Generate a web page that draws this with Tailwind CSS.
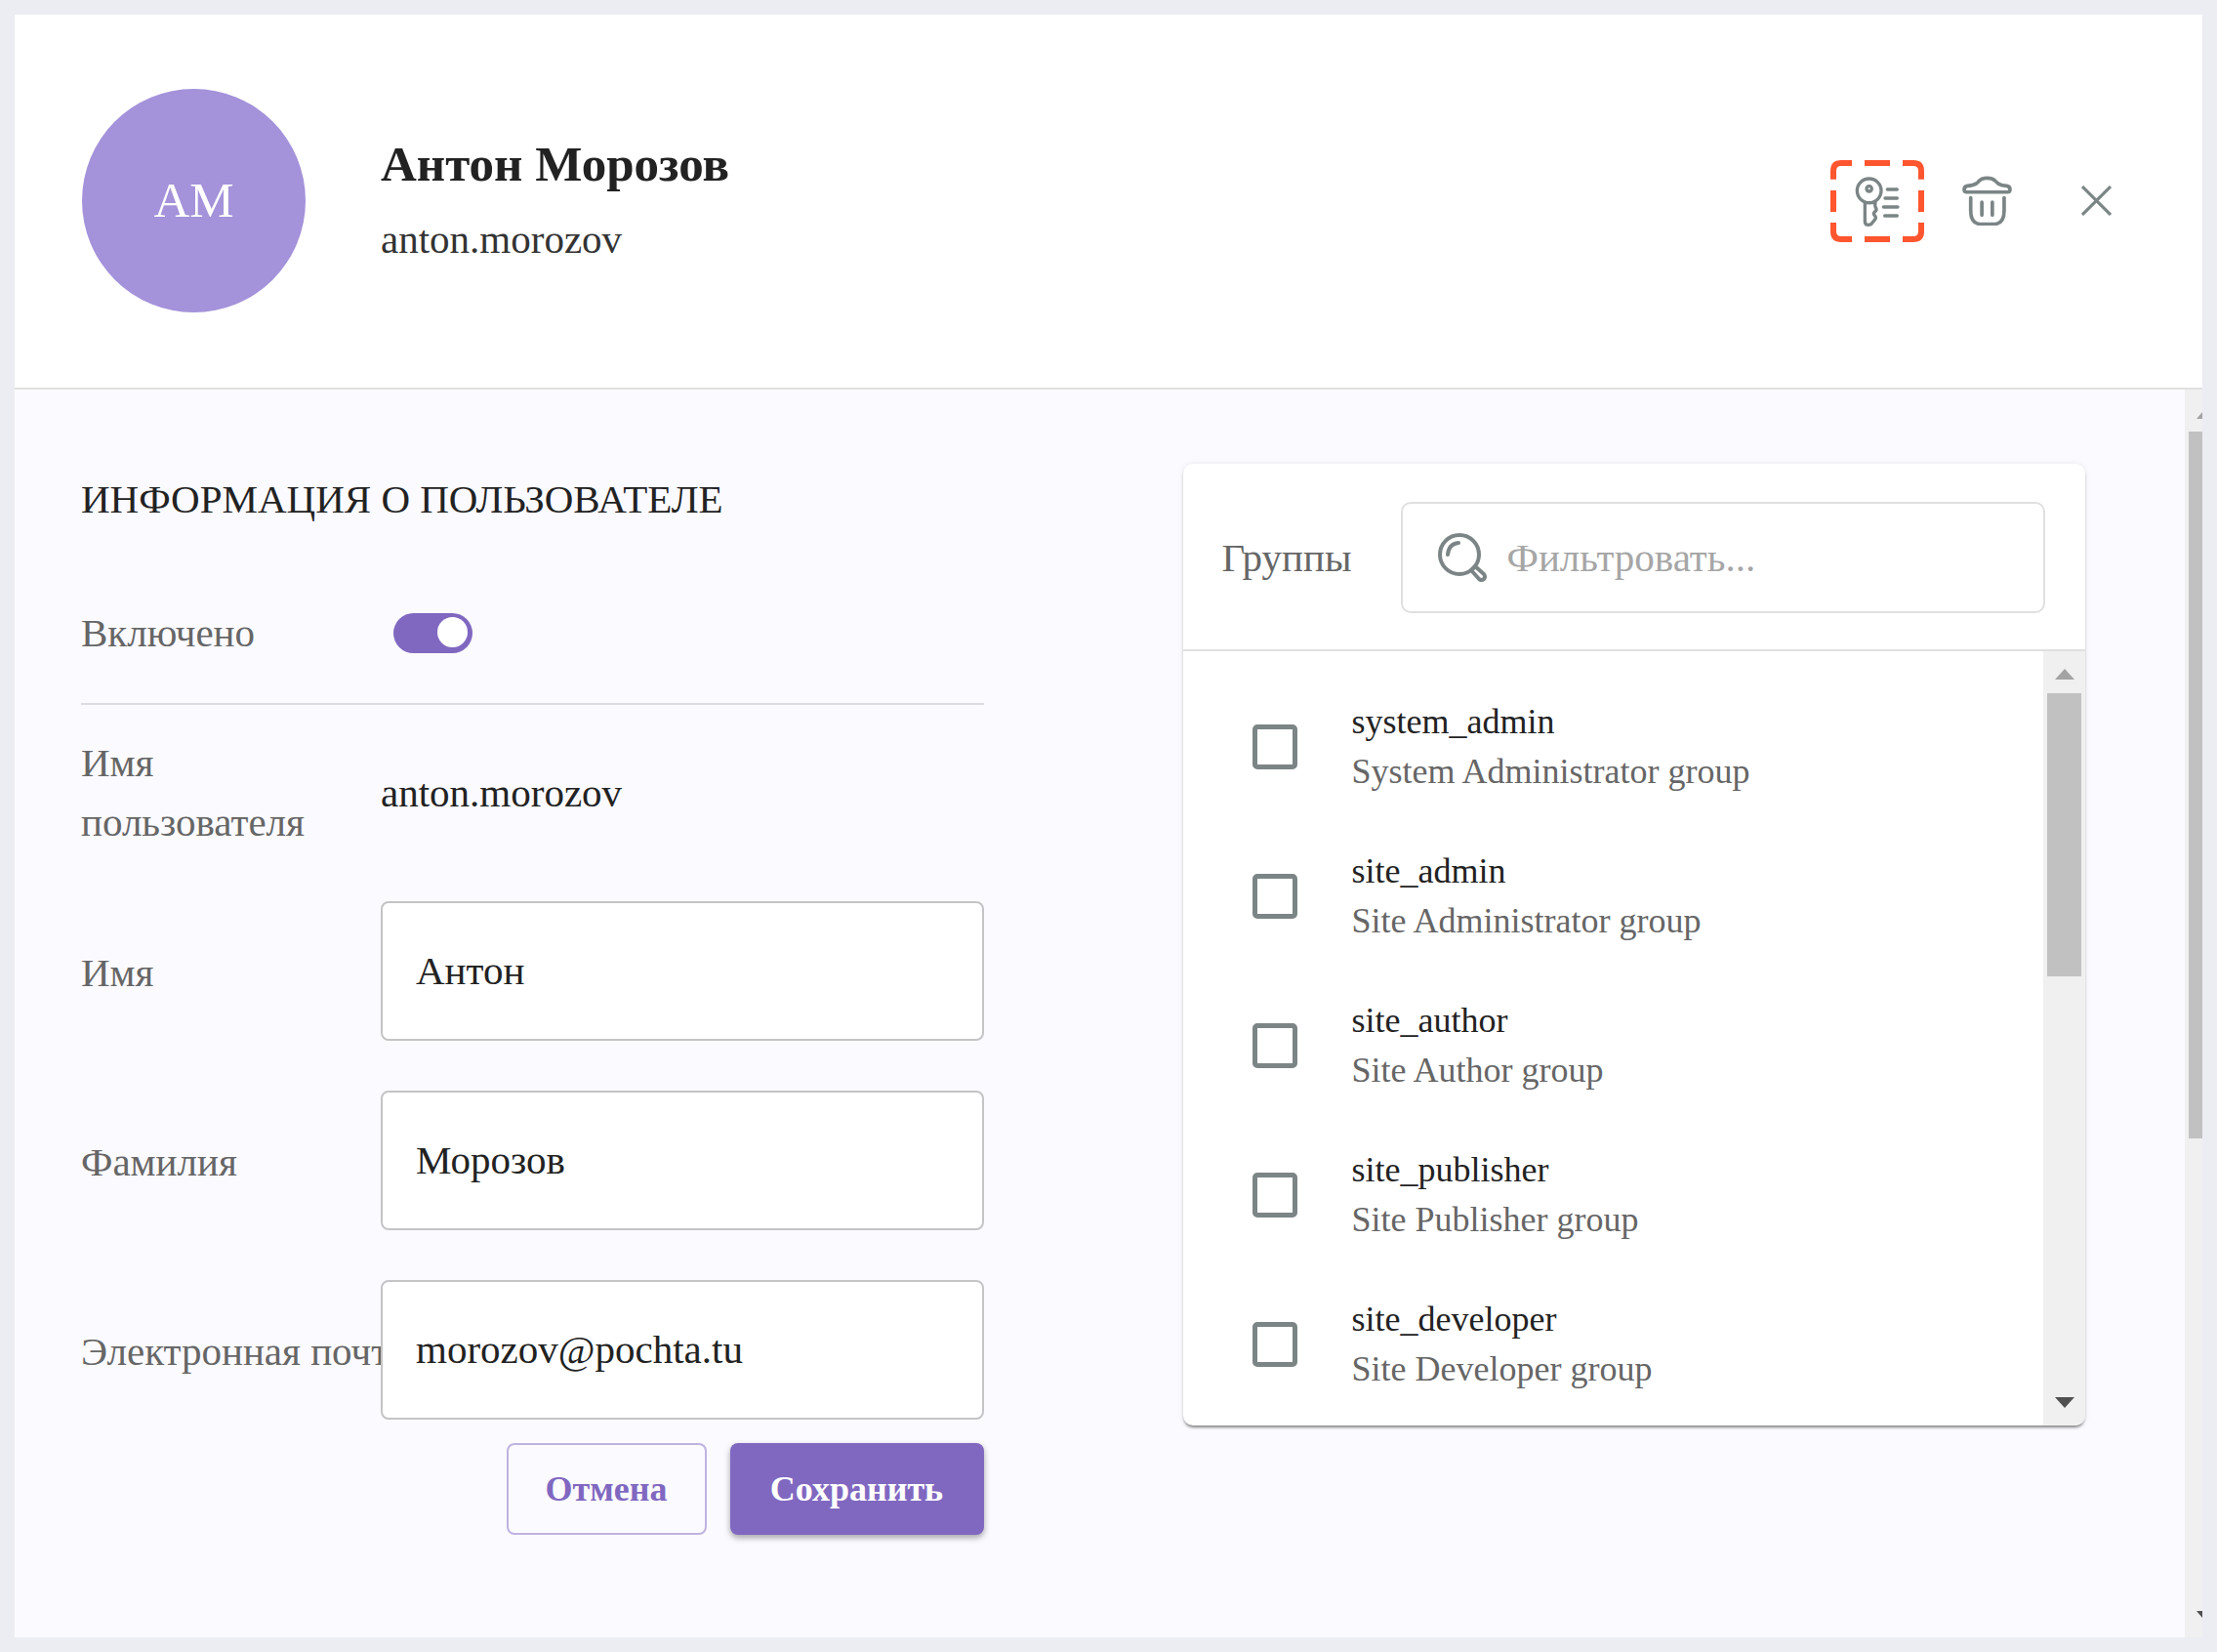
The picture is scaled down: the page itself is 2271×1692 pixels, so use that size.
<!DOCTYPE html>
<html lang="ru">
<head>
<meta charset="utf-8">
<meta name="viewport" content="width=device-width, initial-scale=1">
<title>Антон Морозов</title>
<script src="https://cdn.jsdelivr.net/npm/@tailwindcss/browser@4"></script>
</head>
<body class="bg-[#ecedf2] font-['Liberation_Serif',serif] text-[41px] leading-[61px] text-[#222]">
<main class="flex min-h-screen flex-col p-[15px]">
  <header class="flex items-center border-b-2 border-[#e0e0e0] bg-white pt-[76px] pr-[61px] pb-[77px] pl-[69px]">
    <div class="flex size-[229px] shrink-0 items-center justify-center rounded-full bg-[#a492da] text-[51px] text-white">АМ</div>
    <div class="ml-[77px] flex-1 pb-1">
      <h1 class="text-[51px] leading-[82px] font-bold">Антон Морозов</h1>
      <p class="leading-[72px] text-[#333]">anton.morozov</p>
    </div>
    <div class="flex items-center gap-4 text-[#7c8585]">
      <button type="button" aria-label="Сбросить пароль" class="h-[84px] w-24">
        <svg viewBox="105 96 288 252" class="h-[84px] w-24" fill="none" stroke="currentColor" stroke-width="10" stroke-linecap="round" stroke-linejoin="round">
          <path stroke="#ff5630" stroke-width="18" stroke-linecap="butt" d="M114 155V129Q114 105 138 105H171M210 105H288M327 105H360Q384 105 384 129V155M384 189V255M384 288V315Q384 339 360 339H327M288 339H210M171 339H138Q114 339 114 315V288M114 255V189"/>
          <circle cx="224" cy="190" r="37"/><circle cx="224" cy="184" r="8"/>
          <path d="M211 227V284Q211 295 222 295Q230 295 234 288L243 277Q246 272 241 266Q236 261 240 256Q249 250 245 243Q241 239 243 227Z"/>
          <path d="M280 186H310M273 213H310M268 240H312M272 267H310"/>
        </svg>
      </button>
      <button type="button" aria-label="Удалить" class="flex h-[84px] w-24 items-center justify-center">
        <svg viewBox="512 150 152 152" class="size-[51px]" fill="none" stroke="currentColor" stroke-width="11" stroke-linecap="round" stroke-linejoin="round">
          <path d="M518 192Q518 183 528 181Q546 180 556 173Q561 170 564 165Q572 157 588 157Q604 157 612 165Q618 171 622 174Q632 180 648 181Q658 183 658 192Q658 200 650 200H526Q518 200 518 192Z"/>
          <path d="M538 217V257Q538 298 572 298H606Q640 298 640 257V217M572 231V270M604 231V270"/>
        </svg>
      </button>
      <button type="button" aria-label="Закрыть" class="flex h-[84px] w-24 items-center justify-center">
        <svg viewBox="0 0 30 30" class="size-[31px]" fill="none" stroke="currentColor" stroke-width="3"><path d="M1 1L29 29M29 1L1 29"/></svg>
      </button>
    </div>
  </header>

  <div class="flex flex-1 bg-[#fbfaff]">
    <div class="grid flex-1 grid-cols-2 items-start gap-[204px] pt-[76px] pr-[102px] pl-[68px]">
      <form>
        <h2 class="pt-[6px]">ИНФОРМАЦИЯ О ПОЛЬЗОВАТЕЛЕ</h2>
        <div class="mt-[34px] flex h-[146px] items-center border-b-2 border-[#dcdce2]">
          <label for="enabled" class="w-80 text-[#666]">Включено</label>
          <span class="relative flex h-[41px] w-[81px]">
            <input id="enabled" type="checkbox" role="switch" checked class="h-[41px] w-[81px] appearance-none rounded-full bg-[#8068c1]">
            <span class="pointer-events-none absolute top-1 right-[5px] size-[31px] rounded-full bg-white"></span>
          </span>
        </div>
        <div class="mt-[29px] mb-[50px] flex items-center">
          <div class="w-[307px] shrink-0 pr-10 text-[#666]">Имя пользователя</div>
          <div>anton.morozov</div>
        </div>
        <div class="flex flex-col gap-[51px]">
          <div class="flex items-center">
            <label for="first" class="w-[307px] shrink-0 pt-[3px] whitespace-nowrap text-[#666]">Имя</label>
            <input id="first" type="text" value="Антон" class="relative h-[143px] min-w-0 flex-1 rounded-lg border-2 border-[#c4c4c6] bg-white px-[34px] pb-[2px]">
          </div>
          <div class="flex items-center">
            <label for="last" class="w-[307px] shrink-0 pt-[3px] whitespace-nowrap text-[#666]">Фамилия</label>
            <input id="last" type="text" value="Морозов" class="relative h-[143px] min-w-0 flex-1 rounded-lg border-2 border-[#c4c4c6] bg-white px-[34px] pb-[2px]">
          </div>
          <div class="flex items-center">
            <label for="email" class="w-[307px] shrink-0 pt-[3px] whitespace-nowrap text-[#666]">Электронная почта</label>
            <input id="email" type="email" value="morozov@pochta.tu" class="relative h-[143px] min-w-0 flex-1 rounded-lg border-2 border-[#c4c4c6] bg-white px-[34px] pb-[2px]">
          </div>
        </div>
        <div class="mt-6 flex justify-end gap-6 text-[36px] font-bold">
          <button type="button" class="h-[94px] w-[205px] rounded-lg border-2 border-[#bfb3e0] text-[#8068c1]">Отмена</button>
          <button type="submit" class="h-[94px] w-[260px] rounded-lg bg-[#8068c1] text-white shadow-[0_3px_6px_rgba(0,0,0,0.35)]">Сохранить</button>
        </div>
      </form>

      <section class="overflow-hidden rounded-[10px] bg-white shadow-[0_3px_3px_-1px_rgba(0,0,0,0.45),0_0_6px_rgba(0,0,0,0.08)]">
        <div class="flex items-center border-b-2 border-[#e0e0e0] pt-[39px] pr-[41px] pb-[37px] pl-10">
          <label for="filter" class="mr-[50px] text-[#666]">Группы</label>
          <div class="flex h-[114px] min-w-0 flex-1 items-center rounded-[10px] border-2 border-[#e0e0e0] pr-6 pl-9">
            <svg viewBox="0 0 50 50" class="size-[50px] shrink-0 text-[#7c8585]" fill="none" stroke="currentColor" stroke-width="4" stroke-linecap="round" stroke-linejoin="round"><circle cx="22" cy="22" r="20"/><path d="M10 22Q11 11 21 10M34 38L38 34L47 42Q49 45 47 47Q44 49 42 47Z"/></svg>
            <input id="filter" type="search" placeholder="Фильтровать..." class="ml-[21px] min-w-0 flex-1 outline-none placeholder:text-[#a6a6a6]">
          </div>
        </div>
        <div class="flex h-[793px]">
          <ul class="flex-1 pt-[21px] text-[36px] leading-[51px]">
            <li><label class="flex h-[153px] items-center pl-[71px]"><input type="checkbox" class="size-[46px] appearance-none rounded-[5px] border-[5px] border-[#7c8585]"><span class="ml-14">system_admin<span class="block text-[#666]">System Administrator group</span></span></label></li>
            <li><label class="flex h-[153px] items-center pl-[71px]"><input type="checkbox" class="size-[46px] appearance-none rounded-[5px] border-[5px] border-[#7c8585]"><span class="ml-14">site_admin<span class="block text-[#666]">Site Administrator group</span></span></label></li>
            <li><label class="flex h-[153px] items-center pl-[71px]"><input type="checkbox" class="size-[46px] appearance-none rounded-[5px] border-[5px] border-[#7c8585]"><span class="ml-14">site_author<span class="block text-[#666]">Site Author group</span></span></label></li>
            <li><label class="flex h-[153px] items-center pl-[71px]"><input type="checkbox" class="size-[46px] appearance-none rounded-[5px] border-[5px] border-[#7c8585]"><span class="ml-14">site_publisher<span class="block text-[#666]">Site Publisher group</span></span></label></li>
            <li><label class="flex h-[153px] items-center pl-[71px]"><input type="checkbox" class="size-[46px] appearance-none rounded-[5px] border-[5px] border-[#7c8585]"><span class="ml-14">site_developer<span class="block text-[#666]">Site Developer group</span></span></label></li>
          </ul>
          <div class="flex w-[43px] flex-col items-center bg-[#f0f0f0]">
            <svg viewBox="0 0 20 11" class="mt-[18px] h-[11px] w-5" fill="#a3a3a3"><path d="M0 11L10 0L20 11Z"/></svg>
            <div class="mt-[14px] h-[290px] w-[35px] bg-[#c1c1c1]"></div>
            <svg viewBox="0 0 20 11" class="mt-auto mb-[18px] h-[11px] w-5" fill="#505050"><path d="M0 0L10 11L20 0Z"/></svg>
          </div>
        </div>
      </section>
    </div>
    <div class="flex w-[18px] flex-col items-end overflow-hidden bg-[#f0f0f0]">
      <svg viewBox="0 0 6 8" class="mt-[22px] h-2 w-[6px]" fill="#a3a3a3"><path d="M0 8L6 1V8Z"/></svg>
      <div class="mt-[13px] h-[724px] w-[14px] bg-[#c1c1c1]"></div>
      <svg viewBox="0 0 6 8" class="mt-auto mb-[19px] h-2 w-[6px]" fill="#505050"><path d="M0 0L6 7V0Z"/></svg>
    </div>
  </div>
</main>
</body>
</html>
